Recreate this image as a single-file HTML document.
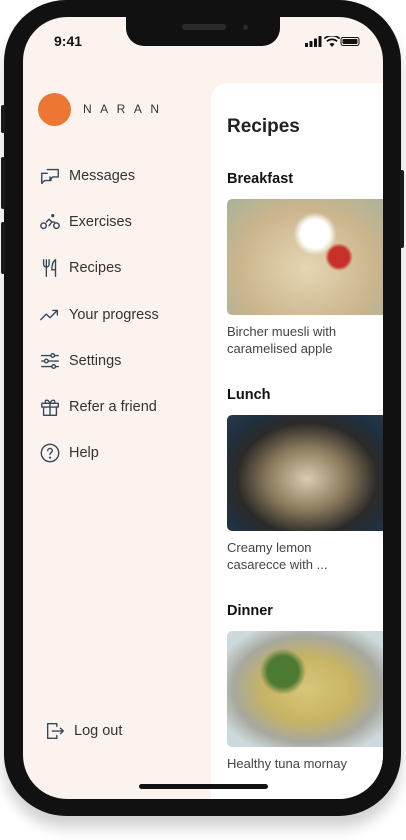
<!DOCTYPE html>
<html><head><meta charset="utf-8"><style>
*{margin:0;padding:0;box-sizing:border-box}
body{width:406px;height:840px;background:#fff;position:relative;overflow:hidden;font-family:"Liberation Sans",sans-serif}
.phone{position:absolute;left:4px;top:0;width:397px;height:816px;background:#111;border-radius:62px;box-shadow:0 12px 14px rgba(0,0,0,.18)}
.btn{position:absolute;background:#1a1a1a;width:4px;border-radius:2px}
.screen{position:absolute;left:23px;top:17px;width:360px;height:782px;background:#fdf3ee;border-radius:44px;overflow:hidden}
.notch{position:absolute;left:103px;top:-2px;width:154px;height:31px;background:#111;border-radius:0 0 18px 18px}
.spk{position:absolute;left:56px;top:9px;width:44px;height:6px;border-radius:3px;background:#2a2a2a}
.cam{position:absolute;left:117px;top:10px;width:5px;height:5px;border-radius:50%;background:#2a2a2a}
.time{position:absolute;left:31px;top:16px;font-size:14px;font-weight:bold;color:#111}
.logo{position:absolute;left:15px;top:76px;width:33px;height:33px;border-radius:50%;background:#ee7634}
.brand{position:absolute;left:60px;top:85px;font-size:12px;letter-spacing:8.5px;color:#333}
.menu{position:absolute;left:16px;top:136px}
.item{height:46.2px;display:flex;align-items:center;font-size:14.5px;color:#333}
.item svg{width:22px;height:22px;margin-right:8px;fill:none;stroke:#33475b;stroke-width:1.5;stroke-linecap:round;stroke-linejoin:round}
.panel{position:absolute;left:188px;top:66px;width:180px;height:730px;background:#fff;border-radius:16px 0 0 0}
h1{position:absolute;left:16px;top:33px;font-size:19px;color:#222}
h2{position:absolute;left:16px;font-size:14.5px;color:#111}
.img{position:absolute;left:16px;width:160px;height:116px;border-radius:5px}
.cap{position:absolute;left:16px;font-size:13px;color:#444;line-height:17px}
.home{position:absolute;left:116px;top:767px;width:129px;height:5px;border-radius:3px;background:#111}
</style></head><body>
<div class="phone">
<div class="btn" style="left:-3px;top:105px;height:28px"></div>
<div class="btn" style="left:-3px;top:157px;height:52px"></div>
<div class="btn" style="left:-3px;top:222px;height:52px"></div>
<div class="btn" style="left:396px;top:170px;height:78px"></div>
</div>
<div class="screen">
<div class="notch"><div class="spk"></div><div class="cam"></div></div>
<div class="time">9:41</div>
<svg style="position:absolute;left:282px;top:19px" width="56" height="11" viewBox="0 0 56 11"><g fill="#111"><rect x="0" y="7" width="3" height="4" rx=".5"/><rect x="4.5" y="5" width="3" height="6" rx=".5"/><rect x="9" y="2.5" width="3" height="8.5" rx=".5"/><rect x="13.5" y="0" width="3" height="11" rx=".5"/><path d="M27 11l-2.5-3a3.5 3.5 0 015 0zM22.5 6a6.5 6.5 0 019 0l1.2-1.3a8.5 8.5 0 00-11.4 0zM20 3.3a10 10 0 0114 0l1.2-1.3a12 12 0 00-16.4 0z"/><rect x="36" y="1.5" width="18" height="8" rx="2" fill="none" stroke="#111" stroke-width="1"/><rect x="37.5" y="3" width="15" height="5" rx="1"/></g></svg>
<div class="logo"></div>
<div class="brand">NARAN</div>
<div class="menu">
<div class="item"><svg viewBox="0 0 24 24"><path d="M9 5h12v8h-6l-3 3v-3"/><path d="M9 9H3v8v3l3-3h7v-2"/></svg>Messages</div>
<div class="item"><svg viewBox="0 0 24 24"><circle cx="5" cy="16" r="3"/><circle cx="19" cy="16" r="3"/><circle cx="15" cy="5" r="1" fill="#33475b"/><path d="M8 12l3-3 3 3-3 4M14 12h3"/></svg>Exercises</div>
<div class="item"><svg viewBox="0 0 24 24"><path d="M5 3v5a3 3 0 006 0V3M8 3v18M18 21V3c-3 2-4 6-4 11h4"/></svg>Recipes</div>
<div class="item"><svg viewBox="0 0 24 24"><path d="M2 17l6-6 4 4 8-8M15 7h5v5"/></svg>Your progress</div>
<div class="item"><svg viewBox="0 0 24 24"><path d="M3 6h18M3 12h18M3 18h18"/><circle cx="15" cy="6" r="2" fill="#fdf3ee"/><circle cx="8" cy="12" r="2" fill="#fdf3ee"/><circle cx="16" cy="18" r="2" fill="#fdf3ee"/></svg>Settings</div>
<div class="item"><svg viewBox="0 0 24 24"><rect x="3" y="8" width="18" height="4"/><path d="M5 12v9h14v-9M12 8v13M12 8C10 3 6 4 7 7M12 8c2-5 6-4 5-1"/></svg>Refer a friend</div>
<div class="item"><svg viewBox="0 0 24 24"><circle cx="12" cy="12" r="9.5"/><path d="M9.5 9.5a2.5 2.5 0 115 0c0 1.8-2.5 2-2.5 4"/><circle cx="12" cy="17" r=".5"/></svg>Help</div>
</div>
<div class="item" style="position:absolute;left:21px;top:691px"><svg viewBox="0 0 24 24"><path d="M14 7V4H4v16h10v-3M9 12h12M18 9l3 3-3 3"/></svg>Log out</div>
<div class="panel">
<h1>Recipes</h1>
<h2 style="top:88px">Breakfast</h2>
<div class="img" style="top:116px;background:radial-gradient(circle at 55% 30%,#fff 0 12%,transparent 18%),radial-gradient(circle at 70% 50%,#c8312a 0 8%,transparent 11%),radial-gradient(ellipse at 50% 60%,#e6d6b4,#cbb58d 60%,#a9b29a)"></div>
<div class="cap" style="top:240px">Bircher muesli with<br>caramelised apple</div>
<h2 style="top:304px">Lunch</h2>
<div class="img" style="top:332px;background:radial-gradient(ellipse at 50% 55%,#d9cdb0 0,#8a7a5c 35%,#2c2a28 62%,#1f3040 80%,#26384a)"></div>
<div class="cap" style="top:456px">Creamy lemon<br>casarecce with ...</div>
<h2 style="top:520px">Dinner</h2>
<div class="img" style="top:548px;background:radial-gradient(circle at 35% 35%,#4d7a33 0 12%,transparent 18%),radial-gradient(ellipse at 50% 50%,#d8c77a 0,#c7b364 40%,#a7a89e 65%,#cdd9dc 85%)"></div>
<div class="cap" style="top:672px">Healthy tuna mornay</div>
</div>
<div class="home"></div>
</div>
</body></html>
